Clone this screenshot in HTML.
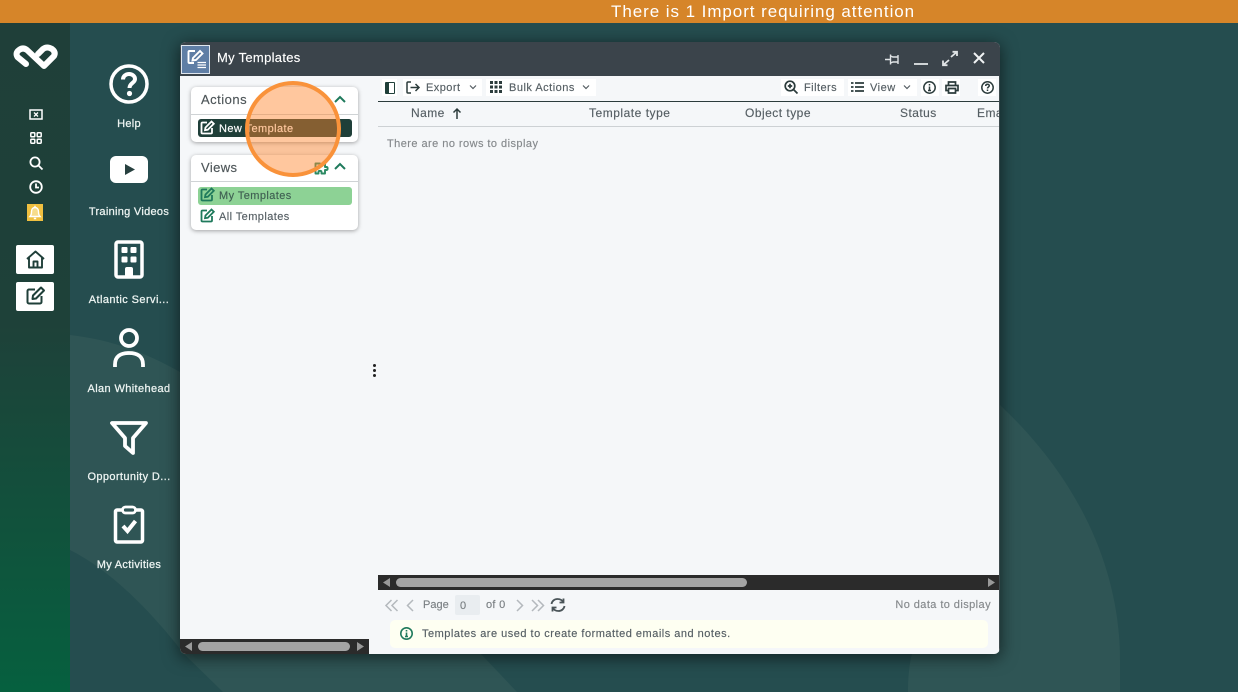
<!DOCTYPE html>
<html><head><meta charset="utf-8"><style>
html,body{margin:0;padding:0}
body{width:1238px;height:692px;overflow:hidden;position:relative;background:#254d4f;font-family:"Liberation Sans",sans-serif}
.a{position:absolute}
.t{position:absolute;white-space:nowrap;line-height:14px;font-size:11px;letter-spacing:.3px;color:#555e63;-webkit-text-stroke:.15px currentColor}
.l{position:absolute;left:71px;width:116px;text-align:center;color:#eef5f3;font-size:11px;line-height:14px;white-space:nowrap;letter-spacing:.3px;-webkit-text-stroke:.25px currentColor}
.card{position:absolute;left:191px;width:167px;background:#fff;border-radius:5px;box-shadow:0 1px 4px rgba(0,0,0,.35)}
svg{position:absolute;overflow:visible}
.w{background:#fff;position:absolute;height:17px;top:79px}
</style></head><body>
<svg style="left:0;top:0" width="1238" height="692" viewBox="0 0 1238 692">
<path fill="#2f5555" d="M70 335C115 340 150 355 180 372L1000 405C1080 480 1120 570 1120 660V692H908C908 675 910 660 912 654L481 654L517 692H223L184 654C150 610 110 570 70 550Z"/>
</svg>
<div class="a" style="left:0;top:23px;width:70px;height:669px;background:linear-gradient(#1f3f39 0,#1e4139 45%,#06603f 100%)"></div>
<div class="a" style="left:0;top:0;width:1238px;height:23px;background:#d68529;color:#fff;font-size:17px;line-height:23px"><span class="a" style="left:611px;white-space:nowrap;letter-spacing:.94px">There is 1 Import requiring attention</span></div>

<!-- logo -->
<svg style="left:13px;top:44px" width="44" height="27" viewBox="0 0 44 27"><path fill="none" stroke="#fff" stroke-width="6" stroke-linejoin="round" stroke-linecap="round" d="M13 20L4.500 13Q2 9 6 6Q10 3 14 6L31 22L41 12Q43 8 39 5Q34 2 30 5L25 10"/></svg>

<!-- side icons -->
<svg style="left:29px;top:109px" width="14" height="11" viewBox="0 0 14 11"><rect x="1" y="1" width="12" height="9" fill="none" stroke="#fff" stroke-width="1.500"/><path d="M5 3.500l4 4M9 3.500l-4 4" stroke="#fff" stroke-width="1.300"/></svg>
<svg style="left:30px;top:132px" width="12" height="12" viewBox="0 0 12 12" fill="none" stroke="#fff" stroke-width="1.500"><rect x=".8" y=".8" width="4" height="4" rx=".8"/><rect x="7.200" y=".8" width="4" height="4" rx=".8"/><rect x=".8" y="7.200" width="4" height="4" rx=".8"/><rect x="7.200" y="7.200" width="4" height="4" rx=".8"/></svg>
<svg style="left:29px;top:156px" width="14" height="14" viewBox="0 0 14 14" fill="none" stroke="#fff" stroke-width="1.800"><circle cx="6" cy="6" r="4.600"/><path d="M9.500 9.500L13.500 13.500"/></svg>
<svg style="left:29px;top:180px" width="14" height="14" viewBox="0 0 14 14" fill="none" stroke="#fff" stroke-width="1.800"><circle cx="7" cy="7" r="5.800"/><path d="M7 3.500V7.500H10"/></svg>
<div class="a" style="left:27px;top:204px;width:16px;height:17px;background:#f0c040"></div>
<svg style="left:28px;top:205px" width="14" height="15" viewBox="0 0 14 15" fill="#f7dc8c" stroke="#fff" stroke-width="1.400"><path d="M2 11.500C3.500 10 3.500 8.500 3.500 6.500C3.500 4 5 2.500 7 2.500C9 2.500 10.500 4 10.500 6.500C10.500 8.500 10.500 10 12 11.500Z"/><path d="M5.800 13.500H8.200M7 .8V2.500"/></svg>

<div class="a" style="left:16px;top:245px;width:38px;height:29px;background:#fff;border-radius:2px"></div>
<svg style="left:26px;top:250px" width="19" height="19" viewBox="0 0 19 19" fill="none" stroke="#1f3f39" stroke-width="1.900" stroke-linejoin="round"><path d="M1 9L9.500 1.500L18 9M3 7.500V17.500H16V7.500M7.500 17.500V11.500H11.500V17.500"/></svg>
<div class="a" style="left:16px;top:282px;width:38px;height:29px;background:#fff;border-radius:2px"></div>
<svg style="left:26px;top:286px" width="19" height="19" viewBox="0 0 19 19" fill="none" stroke="#1f3f39" stroke-width="2" stroke-linejoin="round"><path d="M9 3.500H3A1.500 1.500 0 0 0 1.500 5V16A1.500 1.500 0 0 0 3 17.500H14A1.500 1.500 0 0 0 15.500 16V10"/><path d="M7 9.500L15 1.500L18 4.500L10 12.500L6.500 13Z"/></svg>

<!-- desktop icons -->
<svg style="left:109px;top:64px" width="40" height="40" viewBox="0 0 40 40" fill="none" stroke="#fff"><circle cx="20" cy="20" r="18" stroke-width="3.500"/><path d="M14 15.500C14 12 17 10 20 10C23.500 10 26 12.300 26 15C26 19 20.500 19 20.500 24" stroke-width="4"/><circle cx="20.500" cy="29.500" r="2.600" fill="#fff" stroke="none"/></svg>
<div class="l" style="top:117px">Help</div>
<div class="a" style="left:110px;top:156px;width:38px;height:27px;background:#fff;border-radius:6px"></div>
<svg style="left:125px;top:164px" width="10" height="11" viewBox="0 0 10 11"><path d="M0 0L10 5.500L0 11Z" fill="#27403f"/></svg>
<div class="l" style="top:205px">Training Videos</div>
<svg style="left:114px;top:240px" width="30" height="39" viewBox="0 0 30 39"><rect x="2" y="2" width="26" height="35" rx="2" fill="none" stroke="#fff" stroke-width="3.500"/><g fill="#fff"><rect x="7.500" y="7" width="6" height="6" rx="1"/><rect x="16.500" y="7" width="6" height="6" rx="1"/><rect x="7.500" y="16.500" width="6" height="6" rx="1"/><rect x="16.500" y="16.500" width="6" height="6" rx="1"/><path d="M11 37V29Q11 27 13 27H17Q19 27 19 29V37Z"/></g></svg>
<div class="l" style="top:293px;letter-spacing:.42px">Atlantic Servi...</div>
<svg style="left:112px;top:328px" width="34" height="40" viewBox="0 0 34 40" fill="none" stroke="#fff" stroke-width="3.800"><circle cx="17" cy="10" r="8"/><path d="M3 39V36.500C3 28 9 25 17 25C25 25 31 28 31 36.500V39"/></svg>
<div class="l" style="top:382px;letter-spacing:.38px">Alan Whitehead</div>
<svg style="left:109px;top:420px" width="40" height="37" viewBox="0 0 40 37" fill="none" stroke="#fff" stroke-width="3.800" stroke-linejoin="round"><path d="M3 3H37L24 18V33L16 26V18Z"/></svg>
<div class="l" style="top:470px;letter-spacing:.38px">Opportunity D...</div>
<svg style="left:114px;top:505px" width="30" height="39" viewBox="0 0 30 39" fill="none" stroke="#fff" stroke-width="3.500"><path d="M8 5H3A1.500 1.500 0 0 0 1.500 6.500V35.500A1.500 1.500 0 0 0 3 37H27A1.500 1.500 0 0 0 28.500 35.500V6.500A1.500 1.500 0 0 0 27 5H22"/><rect x="8.500" y="2" width="13" height="6" rx="3" stroke-width="2.800"/><path d="M9 21L13.500 26L21.500 16" stroke-width="4"/></svg>
<div class="l" style="top:558px">My Activities</div>

<!-- window -->
<div class="a" style="left:180px;top:42px;width:820px;height:612px;background:#f5f7f9;border-radius:6px;box-shadow:0 3px 16px 1px rgba(0,0,0,.55);overflow:hidden">
  <div class="a" style="left:0;top:0;width:820px;height:34px;background:#3b444b"></div>
  <div class="a" style="right:0;top:34px;width:1px;height:578px;background:#3d4a4d"></div>
  <div class="a" style="left:1px;top:3px;width:27px;height:27px;background:#5f7ea5;border:1px solid #dfe6ee"></div>
</div>
<svg style="left:186px;top:48px" width="22" height="22" viewBox="0 0 22 22" fill="none" stroke="#fff" stroke-width="1.900"><path d="M9 3H3.500A1 1 0 0 0 2.500 4V14A1 1 0 0 0 3.500 15H8"/><path d="M7 10L14 3L16.500 5.500L10 12L6.500 12.500Z"/><path d="M11.500 14.500H20M11.500 17H20M11.500 19.500H20" stroke-width="1.300"/></svg>
<div class="t" style="left:217px;top:50px;font-size:13px;line-height:16px;color:#fff;letter-spacing:.3px">My Templates</div>

<!-- window controls -->
<svg style="left:885px;top:53px" width="16" height="13" viewBox="0 0 16 13" fill="none" stroke="#e0e4e6" stroke-width="1.400"><path d="M0 6.500H5.500M5.500 1.500V11.500M5.500 3L8 4H13M5.500 10L8 9H13M13 2V11"/></svg>
<div class="a" style="left:914px;top:63px;width:14px;height:2px;background:#cfd4d6"></div>
<svg style="left:942px;top:51px" width="16" height="15" viewBox="0 0 16 15" fill="none" stroke="#e0e4e6" stroke-width="1.800"><path d="M9 6L15 .8M10.500 .8H15V5M7 9L1 14.200M1 9.500V14.200H5.500"/></svg>
<svg style="left:973px;top:52px" width="12" height="12" viewBox="0 0 12 12" stroke="#f0f3f4" stroke-width="2"><path d="M1 1L11 11M11 1L1 11"/></svg>

<!-- Actions card -->
<div class="card" style="top:87px;height:55px"></div>
<div class="a" style="left:191px;top:114px;width:167px;height:1px;background:#cfd3d5"></div>
<div class="t" style="left:201px;top:92px;font-size:13px;line-height:16px;letter-spacing:.5px;color:#4d5558">Actions</div>
<svg style="left:334px;top:95px" width="12" height="8" viewBox="0 0 12 8" fill="none" stroke="#1f7a5c" stroke-width="2"><path d="M1 7L6 2L11 7"/></svg>
<div class="a" style="left:198px;top:119px;width:154px;height:18px;background:#1f3f39;border-radius:3px"></div>
<svg style="left:200px;top:120px" width="15" height="15" viewBox="0 0 15 15" fill="none" stroke="#fff" stroke-width="1.800"><path d="M7 2.500H2.500A1 1 0 0 0 1.500 3.500V12.500A1 1 0 0 0 2.500 13.500H11A1 1 0 0 0 12 12.500V8"/><path d="M5.500 7.500L11.500 1.500L13.800 3.800L7.800 9.800L5 10.200Z"/></svg>
<div class="t" style="left:219px;top:122px;color:#fff;letter-spacing:.42px">New Template</div>

<!-- Views card -->
<div class="card" style="top:155px;height:75px"></div>
<div class="a" style="left:191px;top:181px;width:167px;height:1px;background:#cfd3d5"></div>
<div class="t" style="left:201px;top:160px;font-size:13px;line-height:16px;letter-spacing:.4px;color:#4d5558">Views</div>
<svg style="left:314px;top:161px" width="14" height="14" viewBox="0 0 14 14" fill="none" stroke="#2c8a63" stroke-width="1.900" stroke-linejoin="round"><path d="M1.500 2.500H6V4C6 5.500 8.500 5.500 8.500 4V2.500H11V6H12.500C14 6 14 9 12.500 9H11V12.500H7.500V11C7.500 9.500 4.500 9.500 4.500 11V12.500H1.500Z"/></svg>
<svg style="left:334px;top:162px" width="12" height="8" viewBox="0 0 12 8" fill="none" stroke="#1f7a5c" stroke-width="2"><path d="M1 7L6 2L11 7"/></svg>
<div class="a" style="left:198px;top:187px;width:154px;height:18px;background:#8dd295;border-radius:3px"></div>
<svg style="left:200px;top:187px" width="15" height="15" viewBox="0 0 15 15" fill="none" stroke="#1f7a5c" stroke-width="1.800"><path d="M7 2.500H2.500A1 1 0 0 0 1.500 3.500V12.500A1 1 0 0 0 2.500 13.500H11A1 1 0 0 0 12 12.500V8"/><path d="M5.500 7.500L11.500 1.500L13.800 3.800L7.800 9.800L5 10.200Z"/></svg>
<div class="t" style="left:219px;top:189px;color:#3f5f52;letter-spacing:.42px">My Templates</div>
<svg style="left:200px;top:208px" width="15" height="15" viewBox="0 0 15 15" fill="none" stroke="#1f7a5c" stroke-width="1.800"><path d="M7 2.500H2.500A1 1 0 0 0 1.500 3.500V12.500A1 1 0 0 0 2.500 13.500H11A1 1 0 0 0 12 12.500V8"/><path d="M5.500 7.500L11.500 1.500L13.800 3.800L7.800 9.800L5 10.200Z"/></svg>
<div class="t" style="left:219px;top:210px;color:#555e63;letter-spacing:.42px">All Templates</div>

<!-- highlight -->
<div class="a" style="left:245px;top:81px;width:88px;height:88px;border:4px solid #f9923a;border-radius:50%;background:rgba(255,133,44,.46)"></div>

<!-- left scrollbar & splitter -->
<div class="a" style="left:180px;top:639px;width:189px;height:15px;background:#2b2b2b;border-radius:0 0 0 6px"></div>
<div class="a" style="left:198px;top:642px;width:152px;height:9px;background:#a4a4a4;border-radius:5px"></div>
<svg style="left:185px;top:642px" width="8" height="9"><path d="M7 0V9L0 4.500Z" fill="#999"/></svg>
<svg style="left:357px;top:642px" width="8" height="9"><path d="M0 0V9L7 4.500Z" fill="#999"/></svg>
<div class="a" style="left:373px;top:364px;width:3px;height:3px;border-radius:50%;background:#222;box-shadow:0 5px 0 #222,0 10px 0 #222"></div>

<!-- toolbar -->
<div class="w" style="left:382px;width:15px"></div><div class="w" style="left:403px;width:79px"></div><div class="w" style="left:486px;width:110px"></div>
<div class="w" style="left:781px;width:63px"></div><div class="w" style="left:848px;width:69px"></div><div class="w" style="left:921px;width:18px"></div><div class="w" style="left:942px;width:18px"></div><div class="w" style="left:978px;width:18px"></div>
<div class="a" style="left:385px;top:82px;width:10px;height:12px;border:1px solid #1f3f39;box-sizing:border-box;border-left:4px solid #1f3f39;border-radius:1px"></div>
<svg style="left:406px;top:81px" width="14" height="13" viewBox="0 0 14 13" fill="none" stroke="#2c3c3c" stroke-width="1.500"><path d="M5 1H2A1 1 0 0 0 1 2V11A1 1 0 0 0 2 12H5M4.500 6.500H13M9.500 3L13 6.500L9.500 10"/></svg>
<div class="t" style="left:426px;top:81px;letter-spacing:.45px">Export</div>
<svg style="left:469px;top:85px" width="8" height="5" fill="none" stroke="#555e63" stroke-width="1.200"><path d="M1 .5L4 3.500L7 .5"/></svg>
<svg style="left:490px;top:81px" width="12" height="12" fill="#2c3c3c"><rect width="3" height="3"/><rect x="4.500" width="3" height="3"/><rect x="9" width="3" height="3"/><rect y="4.500" width="3" height="3"/><rect x="4.500" y="4.500" width="3" height="3"/><rect x="9" y="4.500" width="3" height="3"/><rect y="9" width="3" height="3"/><rect x="4.500" y="9" width="3" height="3"/><rect x="9" y="9" width="3" height="3"/></svg>
<div class="t" style="left:509px;top:81px;letter-spacing:.5px">Bulk Actions</div>
<svg style="left:582px;top:85px" width="8" height="5" fill="none" stroke="#555e63" stroke-width="1.200"><path d="M1 .5L4 3.500L7 .5"/></svg>
<svg style="left:784px;top:80px" width="14" height="14" viewBox="0 0 14 14" fill="none" stroke="#2c3c3c" stroke-width="1.700"><circle cx="6" cy="6" r="4.800"/><path d="M9.500 9.500L13.500 13.500M3.800 6H8.200M6 3.800V8.200"/></svg>
<div class="t" style="left:804px;top:81px;letter-spacing:.45px">Filters</div>
<svg style="left:851px;top:81px" width="13" height="12" stroke="#2c3c3c" stroke-width="1.800"><path d="M0 2H2.500M4 2H13M0 6H2.500M4 6H13M0 10H2.500M4 10H13"/></svg>
<div class="t" style="left:870px;top:81px;letter-spacing:.5px">View</div>
<svg style="left:903px;top:85px" width="8" height="5" fill="none" stroke="#555e63" stroke-width="1.200"><path d="M1 .5L4 3.500L7 .5"/></svg>
<svg style="left:923px;top:81px" width="13" height="13" viewBox="0 0 13 13" fill="none" stroke="#2c3c3c" stroke-width="1.500"><circle cx="6.500" cy="6.500" r="5.700"/><path d="M6.500 5.500V9.500M6.500 3V4.500M5 9.500H8"/></svg>
<svg style="left:945px;top:81px" width="14" height="13" viewBox="0 0 14 13" fill="none" stroke="#2c3c3c" stroke-width="1.700"><path d="M3.500 4V1H10.500V4M3 9.500H1V4.500H13V9.500H11M3.500 7.500H10.500V12H3.500Z"/></svg>
<svg style="left:981px;top:81px" width="13" height="13" viewBox="0 0 13 13" fill="none" stroke="#2c3c3c" stroke-width="1.500"><circle cx="6.500" cy="6.500" r="5.700"/><path d="M4.700 5C4.700 3.800 5.500 3.300 6.500 3.300C7.600 3.300 8.300 4 8.300 4.800C8.300 6 6.500 6 6.500 7.500M6.500 8.500V10"/></svg>

<!-- grid header -->
<div class="a" style="left:378px;top:101px;width:621px;height:1px;background:#2c3c3c"></div>
<div class="a" style="left:378px;top:126px;width:621px;height:1px;background:#cdd1d4"></div>
<div class="t" style="left:411px;top:106px;font-size:12px;letter-spacing:.45px">Name</div>
<svg style="left:452px;top:108px" width="10" height="11" fill="none" stroke="#2c3c3c" stroke-width="1.500"><path d="M5 11V1M1.500 4.500L5 1L8.500 4.500"/></svg>
<div class="t" style="left:589px;top:106px;font-size:12px;letter-spacing:.52px">Template type</div>
<div class="t" style="left:745px;top:106px;font-size:12px;letter-spacing:.48px">Object type</div>
<div class="t" style="left:900px;top:106px;font-size:12px;letter-spacing:.45px">Status</div>
<div class="a" style="left:977px;top:106px;width:22px;height:14px;overflow:hidden"><span class="t" style="left:0;top:0;font-size:12px;letter-spacing:.45px">Email</span></div>
<div class="t" style="left:387px;top:137px;color:#85898c;letter-spacing:.45px">There are no rows to display</div>

<!-- main scrollbar -->
<div class="a" style="left:378px;top:575px;width:621px;height:15px;background:#2b2b2b"></div>
<div class="a" style="left:396px;top:578px;width:351px;height:9px;background:#a4a4a4;border-radius:5px"></div>
<svg style="left:383px;top:578px" width="8" height="9"><path d="M7 0V9L0 4.500Z" fill="#999"/></svg>
<svg style="left:988px;top:578px" width="8" height="9"><path d="M0 0V9L7 4.500Z" fill="#999"/></svg>

<!-- pager -->
<svg style="left:385px;top:599px" width="50" height="13" fill="none" stroke="#b4b9bd" stroke-width="1.500"><path d="M6.500 1L1 6.500L6.500 12M12.500 1L7 6.500L12.500 12M28 1L22.500 6.500L28 12"/></svg>
<div class="t" style="left:423px;top:598px;color:#7b8084;letter-spacing:0">Page</div>
<div class="a" style="left:455px;top:595px;width:25px;height:20px;background:#e9edf0;border-radius:2px"></div>
<div class="t" style="left:460px;top:599px;color:#7b8084">0</div>
<div class="t" style="left:486px;top:598px;color:#7b8084">of 0</div>
<svg style="left:516px;top:599px" width="30" height="13" fill="none" stroke="#b4b9bd" stroke-width="1.500"><path d="M1 1L6.500 6.500L1 12M16 1L21.500 6.500L16 12M22 1L27.500 6.500L22 12"/></svg>
<svg style="left:550px;top:597px" width="16" height="16" viewBox="0 0 16 16" fill="none" stroke="#4a5458" stroke-width="1.800"><path d="M1.500 7C2 4 4.500 2 7.500 2C10 2 12 3 13 5M13.500 1.500V5.500H9.500M14.500 9C14 12 11.500 14 8.500 14C6 14 4 13 3 11M2.500 14.500V10.500H6.500"/></svg>
<div class="t" style="right:247px;top:598px;color:#85898c;letter-spacing:.42px">No data to display</div>

<!-- notice -->
<div class="a" style="left:390px;top:620px;width:598px;height:28px;background:#fefff2;border-radius:5px"></div>
<svg style="left:400px;top:627px" width="13" height="13" viewBox="0 0 13 13" fill="none" stroke="#1f7a5c" stroke-width="1.600"><circle cx="6.500" cy="6.500" r="5.700"/><path d="M6.500 5.500V9.500M6.500 3V4.500M5 9.500H8"/></svg>
<div class="t" style="left:422px;top:627px;letter-spacing:.5px;color:#555e63">Templates are used to create formatted emails and notes.</div>
</body></html>
